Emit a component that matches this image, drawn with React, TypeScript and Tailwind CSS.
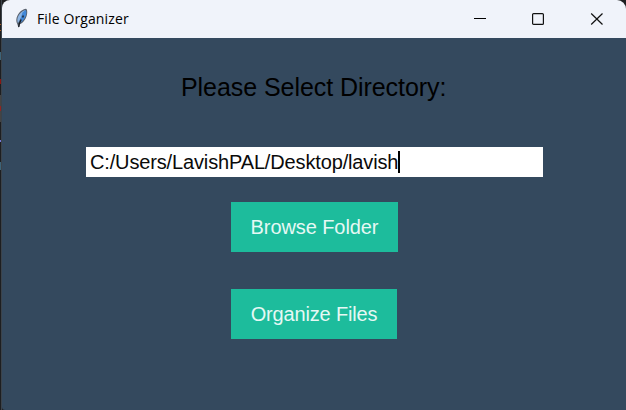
function Feather() {
  return (
    <svg width="13" height="22" viewBox="1 0 13 22" className="shrink-0">
      <path d="M12 .8C8.500 1.200 5 4.200 3.400 7.800 2 10.500 1.900 13.500 3.200 15.800l1.300 3.900 1.500-3.500C9.700 14.500 12.900 10 13.200 5c.1-1.800-.1-4.200-1.200-4.200Z" fill="#58606c" />
      <path d="M11.500 2C8 3 5 6 3.900 9c-.7 2-.8 4.200 0 6.200L11.500 2Z" fill="#8db5e4" />
      <path d="M11.600 2.100 8.500 4.600 5 15.400C9 13.700 12 9.500 12.400 5c.1-1.200-.2-2.400-.8-2.900Z" fill="#4288d8" />
      <path d="m9.300 7.500-.6 2M7.200 11.500l-2 4.500-.4 3" fill="none" stroke="#171b22" strokeWidth="1.300" />
    </svg>
  );
}

function TitleBar() {
  return (
    <header className="flex h-[38px] shrink-0 items-center rounded-tl-[8px] rounded-tr-[9px] bg-[#f0f3fa] pl-[13px] text-black">
      <Feather />
      <h1 className="ml-[9px] flex-1 whitespace-nowrap font-['Open_Sans','Noto_Sans',sans-serif] text-[14px] leading-5 tracking-[0.120px]">
        File Organizer
      </h1>
      <button aria-label="Minimize" className="flex h-full w-[58px] items-center justify-center">
        <svg width="14" height="14" shapeRendering="crispEdges">
          <path d="M0 6.500h12" stroke="#000" />
        </svg>
      </button>
      <button aria-label="Maximize" className="flex h-full w-[58px] items-center justify-center">
        <svg width="14" height="14">
          <rect x="0.600" y="1.600" width="10.800" height="10.800" rx="1" fill="none" stroke="#111" strokeWidth="1.200" />
        </svg>
      </button>
      <button aria-label="Close" className="flex h-full w-[58px] items-center justify-center">
        <svg width="14" height="14">
          <path d="m1.200 1.500 11.300 11m0-11-11.300 11" fill="none" stroke="#111" strokeWidth="1.200" />
        </svg>
      </button>
    </header>
  );
}

export default function App() {
  return (
    <div className="flex h-[410px] w-[626px] overflow-hidden bg-[#1d1e20] font-['Liberation_Sans',Arial,sans-serif]">
      <aside className="flex w-0.5 shrink-0 flex-col border-r border-[#3c434a]">
        <div className="mt-6 h-px bg-[#a85b20]" />
        <div className="mt-[5px] h-px bg-[#a85b20]" />
        <div className="mt-[21px] h-2 bg-[#3d6478]" />
        <div className="mt-[19px] h-[5px] bg-[#8a1512]" />
        <div className="mt-[11px] h-[11px] bg-[#444]" />
        <div className="h-[5px] bg-[#8f2524]" />
        <div className="h-[11px] bg-[#444]" />
        <div className="mt-[18px] h-0.5 bg-[#7779db]" />
        <div className="mt-5 h-2 bg-[#3d6478]" />
      </aside>
      <div className="flex flex-1 flex-col">
        <TitleBar />
        <main className="flex flex-1 flex-col items-start rounded-bl-[3px] bg-[#34495e]">
          <label htmlFor="directory" className="ml-[179px] mt-[34px] whitespace-nowrap text-[25px] leading-[30px] tracking-[-0.060px] text-black">
            Please Select Directory:
          </label>
          <div id="directory" className="ml-[84px] mt-[45px] flex h-[30px] w-[457px] items-center bg-white pl-1">
            <span className="whitespace-nowrap text-[20px] leading-[30px] tracking-[-0.145px] text-[#0a0a0a]">
              C:/Users/LavishPAL/Desktop/lavish
            </span>
            <span className="h-[22px] w-0.5 bg-black" />
          </div>
          <button className="ml-[229px] mt-[25px] h-[50px] w-[167px] whitespace-nowrap bg-[#1dbc9c] text-[20px] tracking-[-0.080px] text-[#e6f8f4]">
            Browse Folder
          </button>
          <button className="ml-[229px] mt-[37px] h-[50px] w-[166px] whitespace-nowrap bg-[#1dbc9c] text-[20px] tracking-[-0.160px] text-[#e6f8f4]">
            Organize Files
          </button>
        </main>
      </div>
    </div>
  );
}
